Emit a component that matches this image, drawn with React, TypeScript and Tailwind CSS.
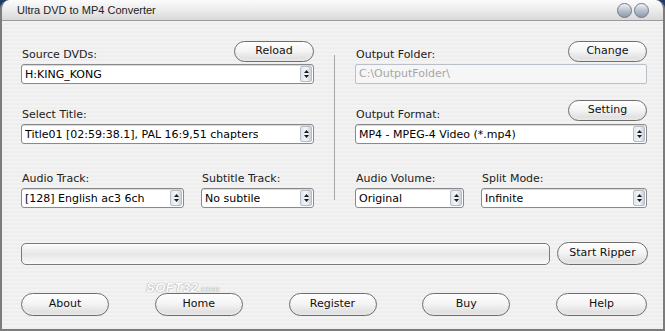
import type { ReactNode } from 'react'

const FONT = { fontFamily: '"DejaVu Sans", Verdana, sans-serif' }

function Arrows() {
  return (
    <div className="flex h-[16px] w-[12px] flex-col items-center justify-center gap-[2px] rounded-[2px] border border-[#b4bcc8] bg-gradient-to-r from-[#dfe5ee] via-[#f4f6fa] to-[#c9d1dd]">
      <svg width="5" height="3" viewBox="0 0 5 3">
        <path d="M2.5 0 L5 3 L0 3 Z" fill="#1a1a1a" />
      </svg>
      <svg width="5" height="3" viewBox="0 0 5 3">
        <path d="M0 0 L5 0 L2.5 3 Z" fill="#1a1a1a" />
      </svg>
    </div>
  )
}

function Select({ value, className }: { value: string; className?: string }) {
  return (
    <div
      className={`flex h-[20px] items-center justify-between rounded-[3px] border border-[#8a8a8a] bg-white pl-[3px] pr-[1px] text-[11px] text-black shadow-[inset_0_1px_0_#d8d8d8] ${className ?? ''}`}>
      <span className="truncate leading-[15px]">{value}</span>
      <Arrows />
    </div>
  )
}

function Pill({ children, className }: { children: ReactNode; className?: string }) {
  return (
    <button
      className={`flex h-[21px] items-center justify-center rounded-full border border-[#6e6e6e] bg-gradient-to-b from-[#ffffff] via-[#f3f3f3] to-[#d9d9d9] text-[11px] text-[#111] shadow-[inset_0_-2px_2px_#e8e8e8] ${className ?? ''}`}>
      {children}
    </button>
  )
}

function Header({ label, button }: { label: string; button?: ReactNode }) {
  return (
    <div className="flex h-[23px] items-start justify-between">
      <span className="mt-[7px] pl-[1px] text-[11px] leading-[13px] text-[#222]">{label}</span>
      {button}
    </div>
  )
}

export default function App() {
  return (
    <div className="h-[331px] w-[665px] bg-[#233a66]" style={FONT}>
      <div className="flex h-full flex-col overflow-hidden rounded-t-[9px] border-x-2 border-b-2 border-[#7c7c7c]">
        {/* title bar */}
        <div className="flex h-[21px] shrink-0 items-center justify-between border-b border-[#9a9a9a] bg-gradient-to-b from-[#fbfbfb] via-[#ececec] to-[#d9d9d9] pl-[15px] pr-[14px]">
          <span className="text-[11px] text-[#222]" style={{ fontFamily: '"Liberation Sans", Arial, sans-serif' }}>
            Ultra DVD to MP4 Converter
          </span>
          <div className="flex gap-[2px]">
            <div className="h-[15px] w-[15px] rounded-full border border-[#6f7a88] bg-gradient-to-b from-[#f2f4f8] via-[#b9c2cf] to-[#8e9aab]" />
            <div className="h-[15px] w-[15px] rounded-full border border-[#6f7a88] bg-gradient-to-b from-[#f2f4f8] via-[#b9c2cf] to-[#8e9aab]" />
          </div>
        </div>

        {/* body */}
        <div className="relative flex flex-1 flex-col bg-[repeating-linear-gradient(0deg,#eeeeee_0px,#eeeeee_2px,#f3f3f3_2px,#f3f3f3_4px)] pl-[19px] pr-[15px]">
          <div className="mt-[20px] flex">
            {/* left */}
            <div className="flex w-[293px] flex-col">
              <Header label="Source DVDs:" button={<Pill className="w-[80px]">Reload</Pill>} />
              <Select value="H:KING_KONG" />
              <div className="mt-[17px]">
                <Header label="Select Title:" />
              </div>
              <Select value="Title01 [02:59:38.1], PAL 16:9,51 chapters" />
              <div className="mt-[21px] flex justify-between">
                <div className="flex w-[163px] flex-col">
                  <Header label="Audio Track:" />
                  <Select value="[128] English ac3 6ch" />
                </div>
                <div className="flex w-[113px] flex-col">
                  <Header label="Subtitle Track:" />
                  <Select value="No subtile" />
                </div>
              </div>
            </div>

            {/* divider */}
            <div className="mx-[20px] mt-[14px] h-[145px] w-px bg-[#a8a8a8]" />

            {/* right */}
            <div className="flex w-[292px] flex-col">
              <Header label="Output Folder:" button={<Pill className="w-[79px]">Change</Pill>} />
              <div className="flex h-[20px] items-center rounded-[2px] border border-[#b9c0c8] bg-[#f6f6f6] pl-[3px] text-[11px] text-[#a6a6a6]">
                C:\OutputFolder\
              </div>
              <div className="mt-[16px]">
                <div className="flex h-[24px] items-start justify-between">
                  <span className="mt-[8px] pl-[1px] text-[11px] leading-[13px] text-[#222]">Output Format:</span>
                  <Pill className="w-[79px]">Setting</Pill>
                </div>
              </div>
              <Select value="MP4 - MPEG-4 Video (*.mp4)" />
              <div className="mt-[21px] flex justify-between">
                <div className="flex w-[109px] flex-col">
                  <Header label="Audio Volume:" />
                  <Select value="Original" />
                </div>
                <div className="flex w-[166px] flex-col">
                  <Header label="Split Mode:" />
                  <Select value="Infinite" />
                </div>
              </div>
            </div>
          </div>

          {/* progress row */}
          <div className="mt-[34px] flex items-center justify-between">
            <div className="h-[22px] w-[529px] rounded-[5px] border border-[#7a7a7a] bg-gradient-to-b from-[#fdfdfd] via-[#e6e6e6] to-[#fafafa]" />
            <Pill className="h-[23px] w-[91px]">Start Ripper</Pill>
          </div>

          {/* bottom buttons */}
          <div className="mt-[28px] flex justify-between pr-[1px]">
            <Pill className="h-[23px] w-[88px]">About</Pill>
            <Pill className="h-[23px] w-[88px]">Home</Pill>
            <Pill className="h-[23px] w-[88px]">Register</Pill>
            <Pill className="h-[23px] w-[88px]">Buy</Pill>
            <Pill className="h-[23px] w-[91px]">Help</Pill>
          </div>

          <span
            className="absolute left-[144px] top-[257px] text-[13px] font-bold italic tracking-[0.5px] text-white [text-shadow:0_0_1px_#9a9a9a,0_0_1px_#9a9a9a]"
            style={{ fontFamily: '"Liberation Sans", Arial, sans-serif' }}>
            SOFT32<span className="text-[9px] font-normal not-italic">.com</span>
          </span>
        </div>
      </div>
    </div>
  )
}
